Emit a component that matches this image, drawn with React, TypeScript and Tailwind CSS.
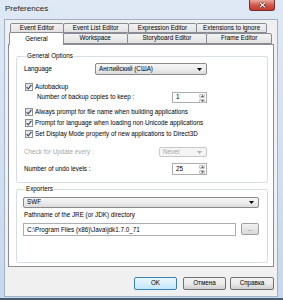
import React from "react";

const F = "font-['Liberation_Sans',Arial,sans-serif]";

function Check() {
  return (
    <div className="w-[8px] h-[8px] border border-[#8e8f8f] bg-gradient-to-br from-[#dcdcdc] to-[#fbfbfb] flex items-center justify-center shrink-0">
      <svg width="6" height="6" viewBox="0 0 6 6">
        <path d="M0.6 3.1 L2.3 4.8 L5.4 0.9" stroke="#3a4d6e" strokeWidth="1.2" fill="none" />
      </svg>
    </div>
  );
}

function Arrow({ color = "#000" }: { color?: string }) {
  return (
    <svg width="5" height="3" viewBox="0 0 5 3" className="shrink-0">
      <path d="M0 0 L5 0 L2.5 3 Z" fill={color} />
    </svg>
  );
}

function Combo({ text, w, disabled = false }: { text: string; w: string; disabled?: boolean }) {
  return (
    <div
      className={`${w} h-full rounded-[2px] border flex items-center pl-[3px] pr-[4px] ${
        disabled
          ? "border-[#c8c8c8] bg-[#f4f4f4] text-[#a8a8a8]"
          : "border-[#8a8a8a] bg-gradient-to-b from-[#f6f6f6] via-[#ececec] to-[#dcdcdc]"
      }`}
    >
      <span className="flex-1">{text}</span>
      <Arrow color={disabled ? "#b0b0b0" : "#000"} />
    </div>
  );
}

function Spin({ value }: { value: string }) {
  return (
    <div className="w-[35px] h-full flex border border-[#abadb3] bg-white">
      <div className="flex-1 flex items-center pl-[3px]">{value}</div>
      <div className="w-[8px] flex flex-col gap-px p-px">
        <div className="flex-1 bg-gradient-to-b from-[#f4f4f4] to-[#dedede] border border-[#c4c4c4] rounded-[1px] flex items-center justify-center">
          <svg width="3" height="2" viewBox="0 0 3 2"><path d="M0 2 L3 2 L1.5 0 Z" fill="#606060" /></svg>
        </div>
        <div className="flex-1 bg-gradient-to-b from-[#f4f4f4] to-[#dedede] border border-[#c4c4c4] rounded-[1px] flex items-center justify-center">
          <svg width="3" height="2" viewBox="0 0 3 2"><path d="M0 0 L3 0 L1.5 2 Z" fill="#606060" /></svg>
        </div>
      </div>
    </div>
  );
}

function Tab({ label, w, selected = false }: { label: string; w: string; selected?: boolean }) {
  return (
    <div
      className={`${w} flex items-center justify-center border border-[#898c95] -ml-px first:ml-0 ${
        selected
          ? "bg-white border-b-0 h-[13px] -mt-[2px] -mb-px relative z-10 rounded-t-[2px]"
          : "bg-gradient-to-b from-[#f3f3f3] to-[#e2e2e2] h-full rounded-t-[2px]"
      }`}
    >
      {label}
    </div>
  );
}

function Btn({ label, w, def = false }: { label: string; w: string; def?: boolean }) {
  return (
    <div
      className={`${w} h-[13px] rounded-[2px] border flex items-center justify-center ${
        def
          ? "border-[#3c7fb1] bg-gradient-to-b from-[#eaf6fd] via-[#d9f0fc] to-[#bee6fd]"
          : "border-[#707070] bg-gradient-to-b from-[#f2f2f2] via-[#ebebeb] to-[#cfcfcf]"
      }`}
    >
      {label}
    </div>
  );
}

export default function App() {
  return (
    <div className={`w-[283px] h-[300px] flex flex-col bg-gradient-to-b from-[#dfe9f5] to-[#c6d8ee] border-b-[2px] border-[#4a5a6e] ${F} text-[6.3px] leading-none text-black overflow-hidden`}>
      {/* title bar */}
      <div className="h-[19px] flex items-start shrink-0">
        <div className="pl-[5px] pt-[5px] text-[8px] text-[#1e1e1e]">Preferences</div>
        <div className="ml-auto mr-[8px] w-[26px] h-[11px] rounded-b-[3px] border border-t-0 border-[#7a2a2a] bg-gradient-to-b from-[#e8a9a0] via-[#d1584a] to-[#c23a2b] flex items-center justify-center">
          <svg width="7" height="6" viewBox="0 0 7 6">
            <path d="M1 0.8 L6 5.2 M6 0.8 L1 5.2" stroke="#3b1010" strokeWidth="2.2" />
            <path d="M1 0.8 L6 5.2 M6 0.8 L1 5.2" stroke="#ffffff" strokeWidth="1.2" />
          </svg>
        </div>
      </div>

      {/* client */}
      <div className="ml-[4px] mr-[5px] mb-[1px] flex-1 bg-[#f0f0f0] border border-[#9fb2c8] flex flex-col pt-[3px] pb-[6px]">
        {/* tab rows */}
        <div className="ml-[5px] mr-[10px] h-[10px] flex shrink-0">
          <Tab label="Event Editor" w="w-[54px]" />
          <Tab label="Event List Editor" w="w-[66px]" />
          <Tab label="Expression Editor" w="w-[70px]" />
          <Tab label="Extensions to ignore" w="w-[71px]" />
        </div>
        <div className="ml-[4px] mr-[5px] h-[11px] flex items-end shrink-0">
          <Tab label="General" w="w-[55px]" selected />
          <Tab label="Workspace" w="w-[65px]" />
          <Tab label="Storyboard Editor" w="w-[81px]" />
          <Tab label="Frame Editor" w="w-[66px]" />
        </div>

        {/* panel */}
        <div className="mx-[3px] h-[223px] shrink-0 border border-[#898c95] bg-white pl-[7px] pr-[5px] pt-[6px] flex flex-col">
          <fieldset className="border border-[#d5dfe5] rounded-[2px] h-[131px] shrink-0 mt-[1px] pl-[7px] pr-[8px] flex flex-col">
            <legend className="ml-[2px] px-[1px] leading-[8px]">General Options</legend>
            <div className="h-[12px] mt-[3px] flex items-center">
              <div className="w-[71px]">Language</div>
              <Combo text="Английский (США)" w="w-[112px]" />
            </div>
            <div className="h-[10px] mt-[7px] flex items-center gap-[2px] pl-[1px]">
              <Check />
              <span>Autobackup</span>
            </div>
            <div className="h-[11px] mt-[0px] flex items-center pl-[13px]">
              <div className="w-[135px]">Number of backup copies to keep :</div>
              <Spin value="1" />
            </div>
            <div className="h-[11px] mt-[3.5px] flex items-center gap-[2px] pl-[1px]">
              <Check />
              <span>Always prompt for file name when building applications</span>
            </div>
            <div className="h-[11px] flex items-center gap-[2px] pl-[1px]">
              <Check />
              <span>Prompt for language when loading non Unicode applications</span>
            </div>
            <div className="h-[11px] flex items-center gap-[2px] pl-[1px]">
              <Check />
              <span>Set Display Mode property of new applications to Direct3D</span>
            </div>
            <div className="h-[10px] mt-[7.5px] flex items-center">
              <div className="w-[135px] text-[#a8a8a8]">Check for Update every :</div>
              <Combo text="Never" w="w-[48px]" disabled />
            </div>
            <div className="h-[12px] mt-[6px] flex items-center">
              <div className="w-[148px]">Number of undo levels :</div>
              <Spin value="25" />
            </div>
          </fieldset>

          <fieldset className="border border-[#d5dfe5] rounded-[2px] h-[78px] shrink-0 mt-[2px] pl-[6px] pr-[8px] flex flex-col">
            <legend className="ml-[2px] px-[1px] leading-[8px]">Exporters</legend>
            <div className="h-[11px] mt-[4px] flex">
              <Combo text="SWF" w="w-full" />
            </div>
            <div className="mt-[4px] pl-[1px]">Pathname of the JRE (or JDK) directory</div>
            <div className="h-[13px] mt-[5px] flex gap-[5px]">
              <div className="flex-1 border border-[#abadb3] bg-white flex items-center pl-[3px]">C:\Program Files (x86)\Java\jdk1.7.0_71</div>
              <div className="w-[18px] h-[12px] rounded-[2px] border border-[#a0a0a0] bg-gradient-to-b from-[#f2f2f2] to-[#d8d8d8] flex items-center justify-center text-[#555]">...</div>
            </div>
          </fieldset>
        </div>

        {/* buttons */}
        <div className="mt-[10px] pr-[3px] flex justify-end">
          <Btn label="OK" w="w-[43px]" def />
          <div className="w-[6px]" />
          <Btn label="Отмена" w="w-[43px]" />
          <div className="w-[4px]" />
          <Btn label="Справка" w="w-[44px]" />
        </div>
      </div>
    </div>
  );
}
